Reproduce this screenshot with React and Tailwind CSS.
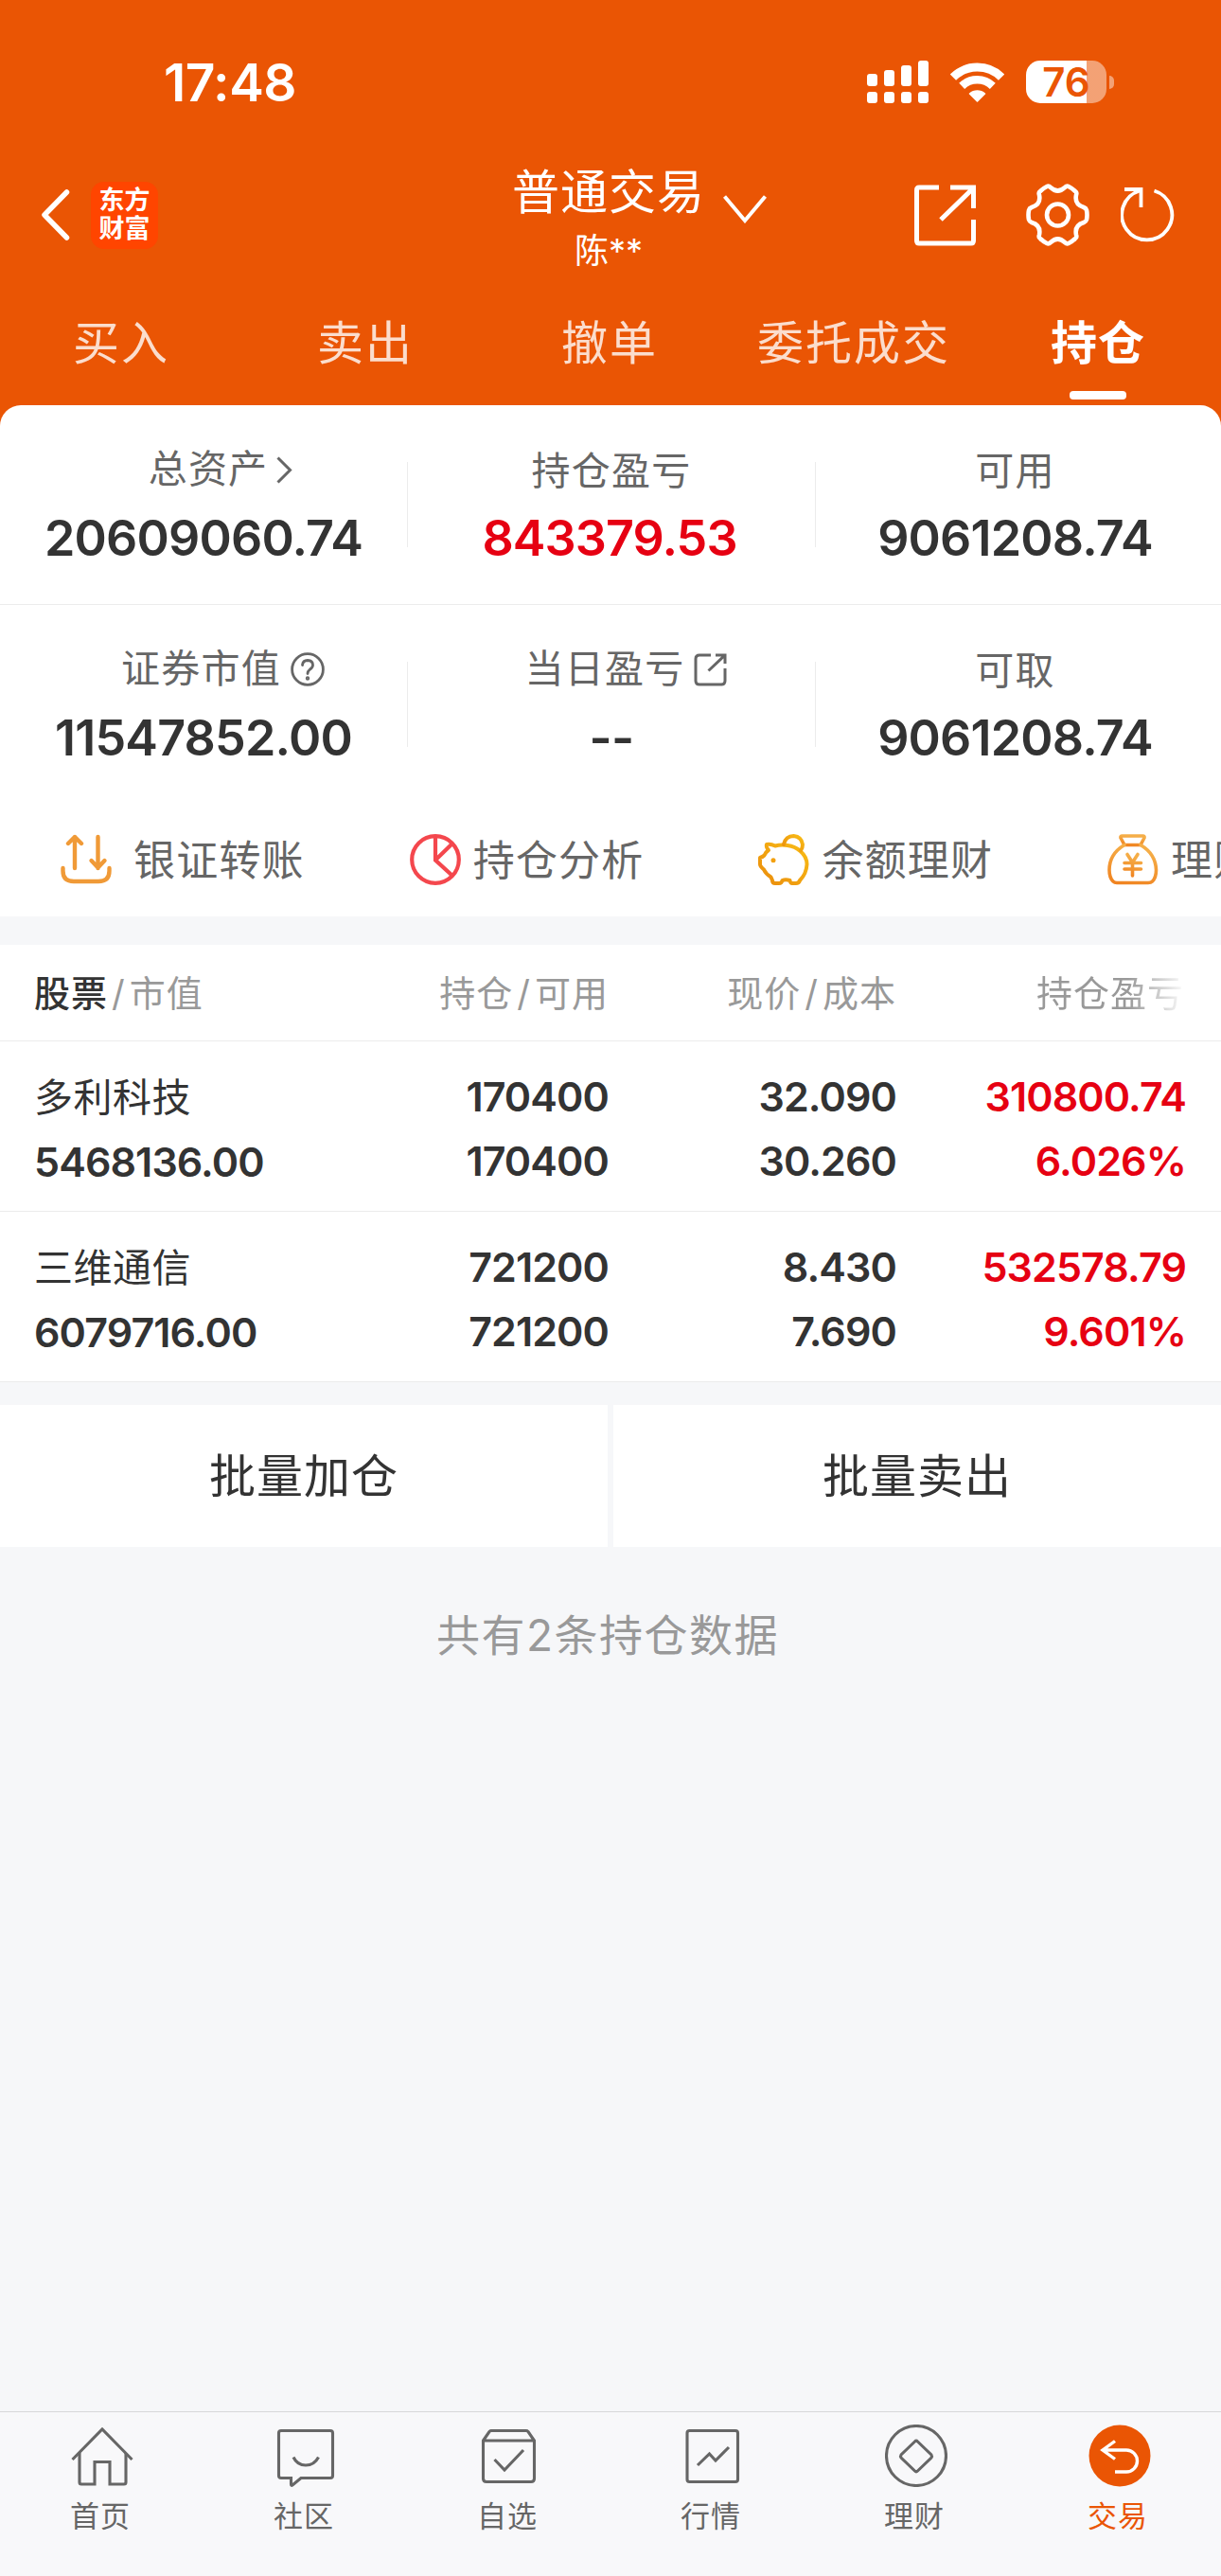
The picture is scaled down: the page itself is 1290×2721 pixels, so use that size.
const TABS = ["买入", "卖出", "撤单", "委托成交", "持仓"]

const HOLDINGS = [
  {
    name: "多利科技",
    value: "5468136.00",
    amount: "170400",
    available: "170400",
    price: "32.090",
    cost: "30.260",
    profit: "310800.74",
    rate: "6.026%",
  },
  {
    name: "三维通信",
    value: "6079716.00",
    amount: "721200",
    available: "721200",
    price: "8.430",
    cost: "7.690",
    profit: "532578.79",
    rate: "9.601%",
  },
]

const StatusBar = () => (
  <div className="flex h-[158px] items-start justify-between pt-[60px] pr-[113px] pl-[173px] text-white">
    <span className="text-[55px] leading-[55px] font-semibold tracking-[-0.5px]">17:48</span>
    <div className="flex items-center pt-1">
      <svg width="65" height="45" viewBox="0 0 65 45" fill="currentColor">
        <rect x="0" y="14" width="11" height="13" rx="3" />
        <rect x="18" y="10" width="11" height="17" rx="3" />
        <rect x="36" y="5" width="11" height="22" rx="3" />
        <rect x="54" y="0" width="11" height="27" rx="3" />
        <rect x="0" y="33" width="11" height="12" rx="3" />
        <rect x="18" y="33" width="11" height="12" rx="3" />
        <rect x="36" y="33" width="11" height="12" rx="3" />
        <rect x="54" y="33" width="11" height="12" rx="3" />
      </svg>
      <svg className="ml-[23px]" width="57" height="43" viewBox="0 0 57 43" fill="none" stroke="currentColor">
        <path d="M2.9 16.6 A36.5 36.5 0 0 1 54.1 16.6" strokeWidth="9" />
        <path d="M12.2 25.9 A23.4 23.4 0 0 1 44.8 25.9" strokeWidth="8.5" />
        <path d="M28.5 42 L20.5 34 A12 12 0 0 1 36.5 34 Z" fill="currentColor" strokeWidth="1.5" strokeLinejoin="round" />
      </svg>
      <div className="relative ml-[23px] h-[45px] w-[85px] rounded-[15px] bg-linear-to-r from-white from-[64px] to-white/45 to-[64px]">
        <span className="absolute inset-0 text-center text-[42px] leading-[45px] font-semibold text-[#ea5504]">76</span>
      </div>
      <div className="ml-[3px] h-[14px] w-[5px] rounded-r-full bg-white/45" />
    </div>
  </div>
)

const NavBar = () => (
  <div className="flex h-[138px] items-center text-white">
    <div className="flex w-[543px] items-center pl-[44px]">
      <svg width="30" height="54" viewBox="0 0 30 54" fill="none" stroke="currentColor" strokeWidth="5.5" strokeLinecap="round" strokeLinejoin="round">
        <path d="M26.5 3 L3 27 L26.5 51" />
      </svg>
      <div className="ml-[22px] flex h-[71px] w-[71px] flex-col items-center justify-center rounded-[14px] bg-[#ff4500] text-[27px] leading-[30px] font-bold">
        <span>东方</span>
        <span>财富</span>
      </div>
    </div>
    <div className="flex w-[200px] flex-col items-center self-end">
      <span className="text-[50px] leading-[62px] tracking-[1px] whitespace-nowrap">普通交易</span>
      <span className="text-[36px] leading-[62px]">陈**</span>
    </div>
    <svg className="mt-[-12px] ml-[21px]" width="46" height="30" viewBox="0 0 46 30" fill="none" stroke="currentColor" strokeWidth="4">
      <path d="M1.5 1.5 L23 27 L44.5 1.5" />
    </svg>
    <div className="ml-auto flex items-center gap-[33px] pr-[49px]">
      <svg className="mr-5" width="65" height="65" viewBox="0 0 65 65" fill="none" stroke="currentColor" strokeWidth="5">
        <path d="M26 3 H5 Q2.5 3 2.5 6 V59 Q2.5 62 5 62 H60 Q62.5 62 62.5 59 V37" />
        <path d="M38 3 H62.5 V25 M62 4 L28 37" />
      </svg>
      <svg width="67" height="66" viewBox="0 0 67 66" fill="none" stroke="currentColor" strokeWidth="4.6" strokeLinejoin="round">
        <path d="M22 3 Q24 2 26 4 Q33.5 11 41 4 Q43 2 45 3 Q49 5 52 8 Q54 9 53 12 Q51 22 61 25 Q63.5 26 64 28 Q65 33 64 38 Q63.5 40 61 41 Q51 44 53 54 Q54 57 52 58 Q49 61 45 63 Q43 64 41 62 Q33.5 55 26 62 Q24 64 22 63 Q18 61 15 58 Q13 57 14 54 Q16 44 6 41 Q3.5 40 3 38 Q2 33 3 28 Q3.5 26 6 25 Q16 22 14 12 Q13 9 15 8 Q18 5 22 3 Z" />
        <circle cx="33.5" cy="33" r="11.5" />
      </svg>
      <svg width="57" height="60" viewBox="0 0 57 60" fill="none" stroke="currentColor" strokeWidth="3.8">
        <path d="M35.5 4.5 A26.5 26.5 0 1 1 20 4.5" />
        <path d="M4 3 H21.5 V22" />
      </svg>
    </div>
  </div>
)

const Tabs = () => (
  <div className="grid h-[132px] grid-cols-5">
    {TABS.map((tab) => {
      const active = tab === "持仓"
      return (
        <div key={tab} className="flex flex-col items-center pt-[34px] pr-[2px]">
          <span
            className={
              active
                ? "text-[49px] leading-[66px] font-bold tracking-[1px] text-white"
                : "text-[49px] leading-[66px] tracking-[2px] text-white/80"
            }
          >
            {tab}
          </span>
          {active && <div className="mt-[17px] h-[9px] w-[60px] rounded-[4px] bg-white" />}
        </div>
      )
    })}
  </div>
)

const Stat = ({ label, value, icon, red }) => (
  <div className="flex flex-col items-center pt-[40px]">
    <div className={icon ? "flex h-[60px] items-center pb-[4px] pl-[36px]" : "flex h-[60px] items-center"}>
      <span className="text-[41px] tracking-[1.2px] text-[#666]">{label}</span>
      {icon}
    </div>
    <span
      className={
        red
          ? "mt-[11px] pr-[4px] text-[52px] leading-[60px] font-semibold tracking-[-0.9px] text-[#e60012]"
          : "mt-[11px] text-[52px] leading-[60px] font-semibold tracking-[-0.8px] text-[#333]"
      }
    >
      {value}
    </span>
  </div>
)

const Divider = () => <div className="h-[90px] self-center bg-[#ececec]" />

const ChevronIcon = () => (
  <svg className="ml-[9px]" width="17" height="29" viewBox="0 0 17 29" fill="none" stroke="#666" strokeWidth="3">
    <path d="M1.5 1.5 L14.5 14.5 L1.5 27.5" />
  </svg>
)

const HelpIcon = () => (
  <svg className="mr-[-5px] ml-[10px]" width="36" height="36" viewBox="0 0 36 36" fill="none" stroke="#666" strokeWidth="2.8" strokeLinecap="round">
    <circle cx="18" cy="18" r="16.4" />
    <path d="M12.5 13.5 Q13 8.5 18 8.5 Q23.5 8.8 23.5 13.5 Q23.5 16 20.5 18 Q18 20 18 22.5" />
    <circle cx="18" cy="27.5" r="0.8" fill="#666" />
  </svg>
)

const ShareIcon = () => (
  <svg className="mr-[5px] ml-[10px]" width="35" height="35" viewBox="0 0 35 35" fill="none" stroke="#666" strokeWidth="3">
    <path d="M18 2 H6 Q2 2 2 6 V29 Q2 33 6 33 H29 Q33 33 33 29 V16" />
    <path d="M23 2 H33 V11 M32.5 2.5 L15.5 18.5" />
  </svg>
)

const Assets = () => (
  <div className="bg-[#ea5504]">
    <div className="rounded-t-[22px] bg-white">
      <div className="grid h-[210px] grid-cols-[430px_1px_430px_1px_1fr] pr-[7px]">
        <Stat label="总资产" value="20609060.74" icon={<ChevronIcon />} />
        <Divider />
        <Stat label="持仓盈亏" value="843379.53" red />
        <Divider />
        <Stat label="可用" value="9061208.74" />
      </div>
      <div className="grid h-[210px] grid-cols-[430px_1px_430px_1px_1fr] border-t border-[#ececec] pr-[7px]">
        <Stat label="证券市值" value="11547852.00" icon={<HelpIcon />} />
        <Divider />
        <Stat label="当日盈亏" value="--" icon={<ShareIcon />} />
        <Divider />
        <Stat label="可取" value="9061208.74" />
      </div>
    </div>
  </div>
)

const TransferIcon = () => (
  <svg className="mr-[10px]" width="54" height="54" viewBox="0 0 54 54" fill="none" stroke="#f09a37" strokeWidth="4.4" strokeLinecap="round" strokeLinejoin="round">
    <path d="M15 36 V3 M8 10 L15 3 L22 10" />
    <path d="M39.5 3 V36 M32.5 28 L39.5 35.5 L46.5 28" />
    <path d="M2.5 36 V39 Q2.5 50 14 50 H40 Q51.5 50 51.5 39 V36" />
  </svg>
)

const PieIcon = () => (
  <svg width="54" height="54" viewBox="0 0 54 54" fill="none" stroke="#f4474d" strokeWidth="4.2">
    <circle cx="27" cy="27" r="24.8" />
    <path d="M27 2 V27.5 L45 44 M27 27.5 L45 10" />
  </svg>
)

const PiggyIcon = () => (
  <svg width="54" height="54" viewBox="0 0 54 54" fill="none" stroke="url(#piggy)" strokeWidth="4" strokeLinejoin="round" strokeLinecap="round">
    <defs>
      <linearGradient id="piggy" x1="1" y1="0" x2="0" y2="1">
        <stop offset="0" stopColor="#f9bd16" />
        <stop offset="1" stopColor="#ea8c0c" />
      </linearGradient>
    </defs>
    <path d="M9 11 Q13 10 18 12.5 Q24 11 31 12 Q39 13 44.5 18 Q51.5 24 51.5 32 Q51 42 44 49 Q43 52 40 52 H36 Q34 52 33.5 49 Q29 47.5 25.5 49 Q25 52 22 52 H18 Q15 52 15 49 L13.5 45.5 Q8 42 6 37.5 Q2 34 2 32 V25 Q5 24 6.5 22.5 Q8 19 11 17 Q8 14 9 11 Z" />
    <path d="M27 11 Q29 2 37.5 2 Q46 3 47 11 Q47 15 45 17.5" />
    <circle cx="16" cy="27.7" r="2.5" fill="#f3a010" stroke="none" />
  </svg>
)

const MoneyBagIcon = () => (
  <svg width="54" height="54" viewBox="0 0 54 54" fill="none" stroke="url(#bag)" strokeWidth="3.6" strokeLinejoin="round" strokeLinecap="round">
    <defs>
      <linearGradient id="bag" x1="0.3" y1="0" x2="0" y2="1">
        <stop offset="0" stopColor="#f5ae48" />
        <stop offset="1" stopColor="#f0821f" />
      </linearGradient>
    </defs>
    <path d="M15.5 2 H37.5 Q39.5 2 39 4 L35 11.5 H18 L14 4 Q13.5 2 15.5 2 Z" />
    <path d="M18 11.5 Q2 21 2 38 Q2 46 6 50 Q7.5 51.5 10 51.5 H43 Q46 51.5 47.5 50 Q51.5 46 51.5 38 Q51 21 35 11.5" />
    <path d="M21 21.5 L26.5 30 L32 21.5 M26.5 30 V44 M18 30.5 H35.5 M18 37 H35.5" />
  </svg>
)

const ACTIONS = [
  { name: "银证转账", icon: TransferIcon },
  { name: "持仓分析", icon: PieIcon },
  { name: "余额理财", icon: PiggyIcon },
  { name: "理财", icon: MoneyBagIcon },
]

const QuickActions = () => (
  <div className="flex h-[120px] items-center overflow-hidden bg-white pl-[64px]">
    {ACTIONS.map((action) => (
      <div key={action.name} className="flex w-[368.7px] shrink-0 items-center gap-[13px]">
        <action.icon />
        <span className="pt-[2px] text-[44px] leading-[60px] tracking-[1.2px] whitespace-nowrap text-[#666]">{action.name}</span>
      </div>
    ))}
  </div>
)

const Cell = ({ top, bottom, className }) => (
  <div className={`flex flex-col text-[43px] leading-[68px] font-semibold tracking-[-0.9px] ${className}`}>
    <span>{top}</span>
    <span>{bottom}</span>
  </div>
)

const HoldingTable = () => (
  <div className="mt-[30px] bg-white">
    <div className="grid h-[102px] grid-cols-[304px_303px_304px_306px] items-center border-b border-[#ececec] pt-[1px] pl-[36px] text-[38px] tracking-[1px] text-[#999]">
      <span>
        <span className="font-medium text-[#333]">股票</span>
        <span className="px-[4px]">/</span>市值
      </span>
      <span className="text-right">
        持仓<span className="px-[4px]">/</span>可用
      </span>
      <span className="text-right">
        现价<span className="px-[4px]">/</span>成本
      </span>
      <span className="bg-linear-to-r from-[#999] from-80% to-white bg-clip-text pr-[2px] text-right text-transparent">持仓盈亏</span>
    </div>
    {HOLDINGS.map((item) => (
      <div key={item.name} className="grid h-[180px] grid-cols-[304px_303px_304px_306px] border-b border-[#ececec] pt-[24px] pl-[36px]">
        <Cell
          top={<span className="text-[41px] font-normal tracking-[0.5px]">{item.name}</span>}
          bottom={item.value}
          className="text-[#333]"
        />
        <Cell top={item.amount} bottom={item.available} className="items-end text-[#333]" />
        <Cell top={item.price} bottom={item.cost} className="items-end text-[#333]" />
        <Cell top={item.profit} bottom={item.rate} className="items-end text-[#e60012]" />
      </div>
    ))}
  </div>
)

const HomeIcon = () => (
  <>
    <path d="M1.5 37 L33 5 L64.5 37" />
    <path d="M9 30 V61 Q9 63 11 63 H25 V39.5 H41 V63 H56 Q58 63 58 61 V30" />
  </>
)

const CommunityIcon = () => (
  <>
    <path d="M7 6.5 H59 Q61.5 6.5 61.5 9 V54 Q61.5 56.5 59 56.5 H28 L19 64 Q17.5 65 17.5 63 V56.5 H7 Q4.5 56.5 4.5 54 V9 Q4.5 6.5 7 6.5 Z" />
    <path d="M20 34.5 Q24 43 33 43 Q42 43 46.5 34.5" />
  </>
)

const WatchIcon = () => (
  <>
    <path d="M5.5 17 L12 7.5 Q13 6.5 14 6.5 H51 Q52 6.5 53 7.5 L59.5 17 V57 Q59.5 60.5 56 60.5 H9 Q5.5 60.5 5.5 57 Z M5.5 17 H59.5" />
    <path d="M17.5 37 L28 48 L48 27" />
  </>
)

const MarketIcon = () => (
  <>
    <rect x="6" y="6.5" width="53.5" height="54" rx="2.5" />
    <path d="M17 43 L29.5 31 L36 38 L50 24" />
  </>
)

const WealthIcon = () => (
  <>
    <circle cx="33" cy="33" r="31.5" />
    <path d="M31.5 18 Q33 16.5 34.5 18 L49 32 Q50 33.5 49 35 L34.5 49 Q33 50.5 31.5 49 L17 35 Q16 33.5 17 32 Z" />
  </>
)

const TradeIcon = () => (
  <>
    <circle cx="33" cy="33" r="32.5" fill="#ea5504" stroke="none" />
    <path d="M28 17.5 L15 27 L28 36.5 M15 27 H40 A11.5 11.5 0 0 1 40 50 H28" stroke="#fff" strokeWidth="3.4" />
  </>
)

const NAV = [
  { name: "首页", icon: HomeIcon },
  { name: "社区", icon: CommunityIcon },
  { name: "自选", icon: WatchIcon },
  { name: "行情", icon: MarketIcon },
  { name: "理财", icon: WealthIcon },
  { name: "交易", icon: TradeIcon, active: true },
]

const BottomNav = () => (
  <div className="mt-auto grid h-[174px] grid-cols-6 border-t border-[#d8d8da] bg-[#f8f8fa] pt-[13px]">
    {NAV.map((item) => (
      <div key={item.name} className="flex flex-col items-center">
        <svg width="66" height="66" viewBox="0 0 66 66" fill="none" stroke="#666" strokeWidth="3.1">
          <item.icon />
        </svg>
        <span
          className={
            item.active
              ? "mt-[9px] pr-[3px] text-[31px] leading-[44px] tracking-[1px] text-[#ea5504]"
              : "mt-[9px] pr-[3px] text-[31px] leading-[44px] tracking-[1px] text-[#666]"
          }
        >
          {item.name}
        </span>
      </div>
    ))}
  </div>
)

const App = () => {
  return (
    <div className="flex h-[2721px] w-[1290px] flex-col overflow-hidden bg-[#f6f7f9] font-[Inter,'Noto_Sans_CJK_SC',sans-serif]">
      <div className="bg-[#ea5504]">
        <StatusBar />
        <NavBar />
        <Tabs />
      </div>
      <Assets />
      <QuickActions />
      <HoldingTable />
      <div className="mt-[24px] grid h-[150px] grid-cols-2 gap-[6px] text-[49px] tracking-[1px] text-[#333]">
        <div className="flex items-center justify-center bg-white pt-[2px]">批量加仓</div>
        <div className="flex items-center justify-center bg-white pt-[2px]">批量卖出</div>
      </div>
      <div className="mt-[61px] pr-[6px] text-center text-[46px] leading-[64px] tracking-[1.5px] text-[#999]">共有2条持仓数据</div>
      <BottomNav />
    </div>
  )
}

export default App
